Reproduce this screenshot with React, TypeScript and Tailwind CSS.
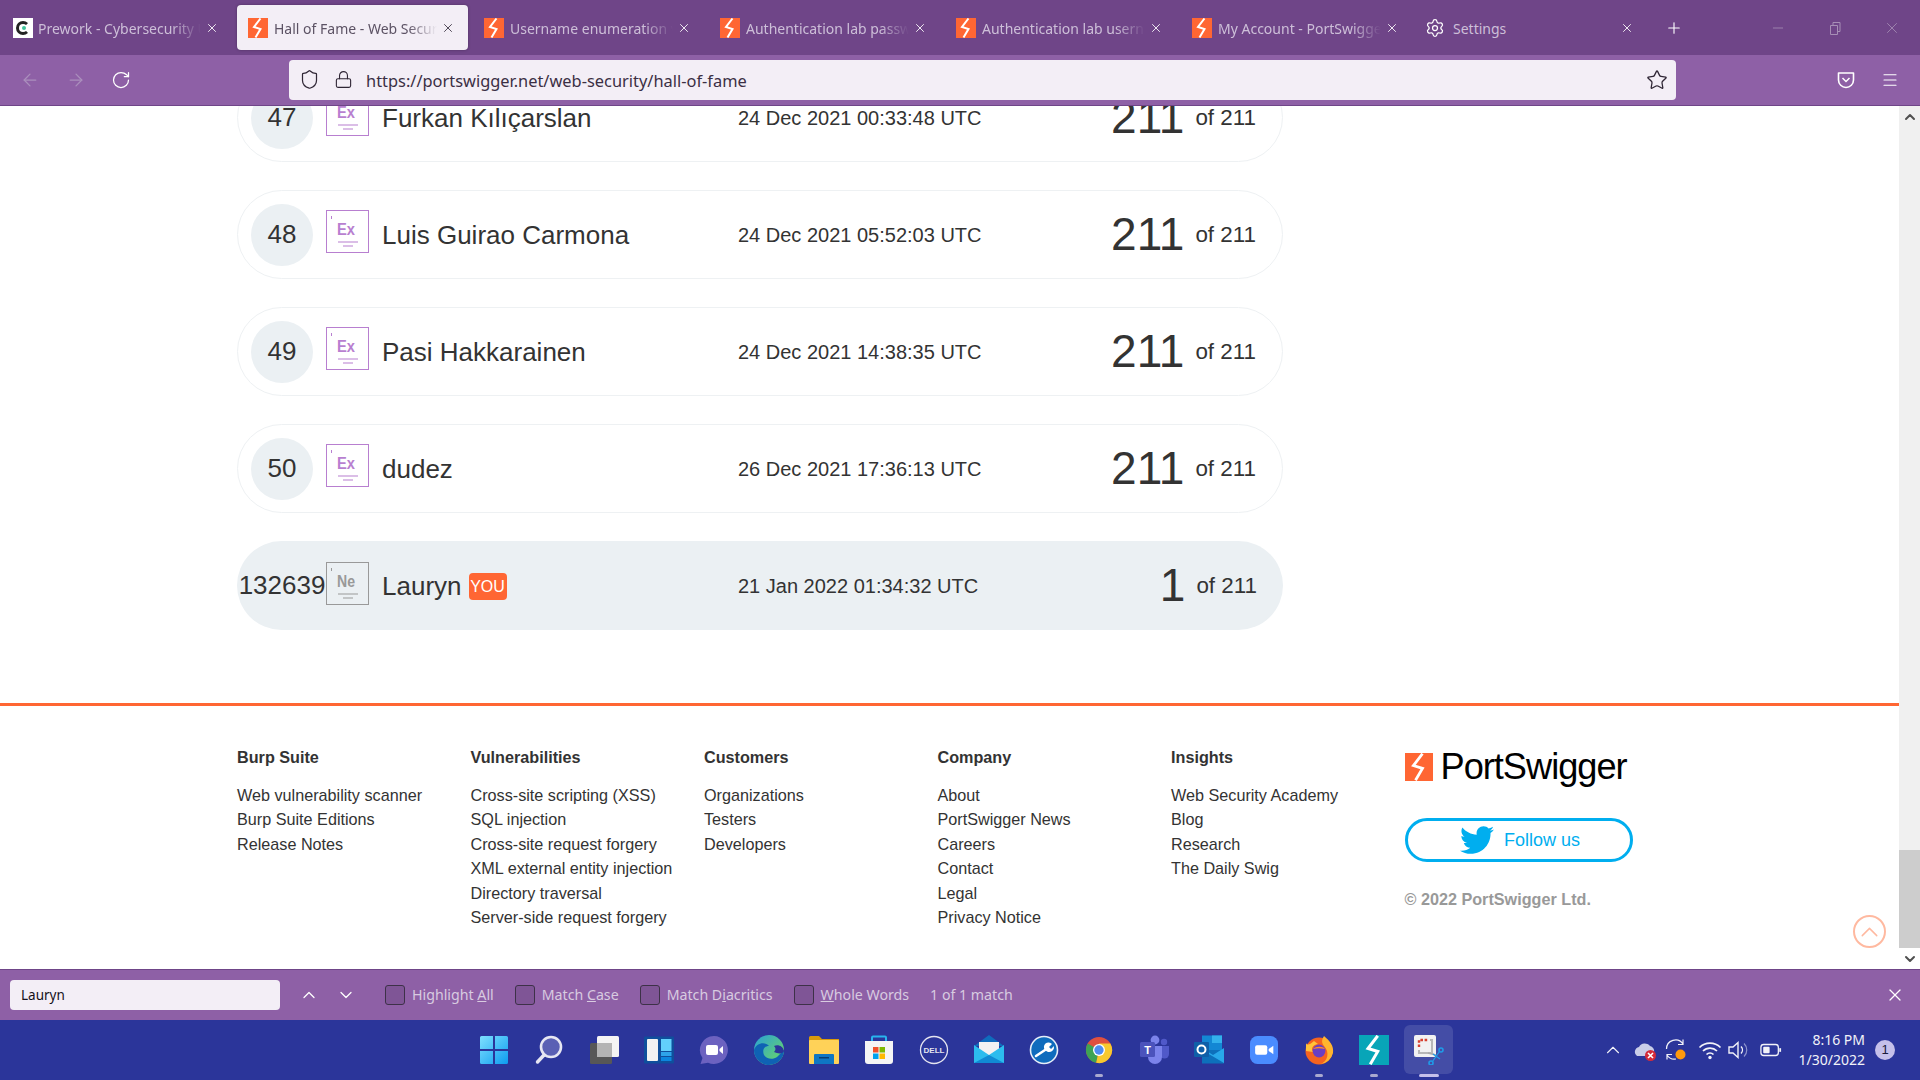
import React from "react";
import {
  ArrowLeft,
  ArrowRight,
  ChevronDown,
  ChevronUp,
  Lock,
  Menu,
  Minus,
  Plus,
  RotateCw,
  Settings,
  Shield,
  Star,
  X,
} from "lucide-react";
import { FaTwitter } from "react-icons/fa";

const rows = [
  { rank: "47", name: "Furkan Kılıçarslan", date: "24 Dec 2021 00:33:48 UTC", score: "211" },
  { rank: "48", name: "Luis Guirao Carmona", date: "24 Dec 2021 05:52:03 UTC", score: "211" },
  { rank: "49", name: "Pasi Hakkarainen", date: "24 Dec 2021 14:38:35 UTC", score: "211" },
  { rank: "50", name: "dudez", date: "26 Dec 2021 17:36:13 UTC", score: "211" },
];

const footerColumns = [
  { title: "Burp Suite", links: ["Web vulnerability scanner", "Burp Suite Editions", "Release Notes"] },
  {
    title: "Vulnerabilities",
    links: [
      "Cross-site scripting (XSS)",
      "SQL injection",
      "Cross-site request forgery",
      "XML external entity injection",
      "Directory traversal",
      "Server-side request forgery",
    ],
  },
  { title: "Customers", links: ["Organizations", "Testers", "Developers"] },
  { title: "Company", links: ["About", "PortSwigger News", "Careers", "Contact", "Legal", "Privacy Notice"] },
  { title: "Insights", links: ["Web Security Academy", "Blog", "Research", "The Daily Swig"] },
];

const BoltSquare = ({ className, bg = "#ff6633" }: { className?: string; bg?: string }) => (
  <svg viewBox="0 0 20 20" className={className}>
    <rect width="20" height="20" fill={bg} />
    <path d="M12.5 0.5 L6 9 L12.5 11 L7.5 19.5" fill="none" stroke="#fff" strokeWidth="2" />
  </svg>
);

const ElementBox = ({ label, color, you }: { label: string; color: string; you?: boolean }) => (
  <svg viewBox="0 0 43 43" className={`w-[43px] h-[43px] shrink-0 ${you ? "mb-[5px]" : "mb-[7px]"}`}>
    <rect x="0.5" y="0.5" width="42" height="42" fill="none" stroke={color} strokeWidth="1" />
    <path d="M5.5 6 V9" stroke={color} strokeWidth="1" />
    <text
      x="11"
      y="25"
      fontSize="17"
      fontWeight="600"
      fontFamily="'Liberation Sans', sans-serif"
      fill={color}
      textLength="18"
      lengthAdjust="spacingAndGlyphs"
    >
      {label}
    </text>
    <path d="M12 32 H32 M17 36 H27" stroke={color} strokeWidth="1.2" />
  </svg>
);

function Tab({ title, active, first }: { title: string; active?: boolean; first?: boolean }) {
  return (
    <div
      className={`w-[231px] h-[45px] mr-[5px] shrink-0 flex items-center pl-[11px] pr-[13px] rounded-[4px] ${
        active ? "bg-[#f3eef6] text-[#5c5264] shadow-[0_0_3px_rgba(0,0,0,0.3)]" : "text-[#cdbfd8]"
      }`}
    >
      {first ? (
        <div className="w-[20px] h-[20px] ml-[1px] -mr-[1px] bg-white flex items-center justify-center shrink-0 relative">
          <div className="w-[14px] h-[14px] rounded-full border-[3px] border-[#222] border-r-transparent" />
          <div className="absolute left-[9px] top-[8px] w-[4px] h-[4px] rounded-full bg-[#3fc49a]" />
        </div>
      ) : (
        <BoltSquare className="w-[20px] h-[20px] shrink-0" />
      )}
      <span className="ml-[6px] pt-[1px] flex-1 text-[14px] whitespace-nowrap overflow-hidden [mask-image:linear-gradient(to_right,black_82%,transparent)]">
        {title}
      </span>
      <X className={`w-[14px] h-[14px] shrink-0 ml-[4px] ${active ? "text-[#3c3444]" : "text-white"}`} strokeWidth={1.5} />
    </div>
  );
}

function Row({ rank, name, date, score, you }: { rank: string; name: string; date: string; score: string; you?: boolean }) {
  return (
    <div
      className={`w-[1046px] h-[89px] shrink-0 rounded-full flex items-center pr-[26px] text-[#333333] ${
        you ? "bg-[#ebf0f3] pl-[14px]" : "border border-[#eef1f3] pl-[13px]"
      }`}
    >
      <div className="w-[62px] h-[62px] rounded-full bg-[#ebf0f3] flex items-center justify-center text-[26px] shrink-0">
        {rank}
      </div>
      <div className="ml-[13px]">
        <ElementBox label={you ? "Ne" : "Ex"} color={you ? "#999999" : "#b87fd0"} you={you} />
      </div>
      <div className="ml-[13px] pt-[2px] w-[356px] flex items-center text-[26px] shrink-0">
        <span>{name}</span>
        {you && (
          <span className="ml-[7px] w-[38px] h-[27px] rounded-[4px] bg-[#ff6633] text-white text-[16px] flex items-center justify-center">
            YOU
          </span>
        )}
      </div>
      <div className="text-[20px] whitespace-nowrap">{date}</div>
      <div className="ml-auto flex items-center">
        <span className="text-[46px] leading-none -mt-[2px]">{score}</span>
        <span className="ml-[11px] text-[22.4px]">of 211</span>
      </div>
    </div>
  );
}

function FindOption({ children }: { children: React.ReactNode }) {
  return (
    <div className="flex items-center mr-[21px]">
      <div className="w-[20px] h-[20px] rounded-[3px] border border-[#3d3148] bg-[#7f5596]" />
      <span className="ml-[7px]">{children}</span>
    </div>
  );
}

const TaskIcons: { key: string; node: React.ReactNode; dot?: boolean; active?: boolean }[] = [
  {
    key: "start",
    node: (
      <svg viewBox="0 0 30 30" className="w-[30px] h-[30px]">
        <defs>
          <linearGradient id="win" x1="0" y1="0" x2="1" y2="1">
            <stop offset="0" stopColor="#7fe0ff" />
            <stop offset="1" stopColor="#0d9cf0" />
          </linearGradient>
        </defs>
        <path d="M1 2.5 Q1 1 2.5 1 H14 V14 H1 Z M16 1 H27.5 Q29 1 29 2.5 V14 H16 Z M1 16 H14 V29 H2.5 Q1 29 1 27.5 Z M16 16 H29 V27.5 Q29 29 27.5 29 H16 Z" fill="url(#win)" />
      </svg>
    ),
  },
  {
    key: "search",
    node: (
      <svg viewBox="0 0 30 30" className="w-[30px] h-[30px]">
        <circle cx="17" cy="12" r="10" fill="#5a60b4" stroke="#e6e6f2" strokeWidth="2.6" />
        <path d="M10 20 L3.5 27" stroke="#e6e6f2" strokeWidth="3.4" strokeLinecap="round" />
      </svg>
    ),
  },
  {
    key: "taskview",
    node: (
      <svg viewBox="0 0 30 30" className="w-[30px] h-[30px]">
        <rect x="1" y="8" width="22" height="21" rx="1.5" fill="#575757" />
        <rect x="8" y="1" width="22" height="21" rx="1.5" fill="#f4f4f4" />
        <rect x="8" y="8" width="15" height="14" fill="#b4b4b4" />
      </svg>
    ),
  },
  {
    key: "widgets",
    node: (
      <svg viewBox="0 0 30 30" className="w-[30px] h-[30px]">
        <rect width="30" height="27" y="1.5" rx="1" fill="#0f4f9c" />
        <rect x="3" y="4" width="11" height="22" rx="1" fill="#f2f2f2" />
        <rect x="17" y="4" width="10.5" height="12" fill="#62d0fb" />
        <rect x="17" y="17" width="10.5" height="4" fill="#2ea4ea" />
        <rect x="17" y="22" width="10.5" height="4" fill="#0c86de" />
      </svg>
    ),
  },
  {
    key: "chat",
    node: (
      <svg viewBox="0 0 30 30" className="w-[30px] h-[30px]">
        <path d="M15 1 A14 14 0 1 1 9 27.7 L1.5 29 L3.5 23 A14 14 0 0 1 15 1 Z" fill="#6c62c0" />
        <rect x="7" y="10" width="12" height="10" rx="2" fill="#fff" />
        <path d="M20.5 14 L24 11 V19 L20.5 16 Z" fill="#fff" />
      </svg>
    ),
  },
  {
    key: "edge",
    node: (
      <svg viewBox="0 0 30 30" className="w-[30px] h-[30px]">
        <defs>
          <linearGradient id="edgeTop" x1="0" y1="0" x2="1" y2="1">
            <stop offset="0" stopColor="#2a9fd8" />
            <stop offset="1" stopColor="#6fdc5c" />
          </linearGradient>
        </defs>
        <circle cx="15" cy="15" r="15" fill="url(#edgeTop)" />
        <path d="M30 15 A15 15 0 0 1 15 30 C7 30 0 23 0 15 C2 8 11 6 15 11 C10 11 8 15 10 20 C12 24 19 25 23 22 L30 15 Z" fill="#0f62b4" />
        <path d="M30 16 C29 11 24 9 20 11 C22 13 22 15 20 17 C24 19 29 19 30 16 Z" fill="#2b359a" />
      </svg>
    ),
  },
  {
    key: "explorer",
    node: (
      <svg viewBox="0 0 30 30" className="w-[30px] h-[30px]">
        <path d="M0 2.5 Q0 1 1.5 1 H10 L13 4 H30 V8 H0 Z" fill="#d99a0c" />
        <rect y="5" width="30" height="24" rx="1" fill="#ffd258" />
        <path d="M5 27 V20 Q5 19 6 19 H24 Q25 19 25 20 V29 H5 Z" fill="#0f76c4" />
        <rect x="10" y="22" width="10" height="1.5" fill="#063d73" />
      </svg>
    ),
  },
  {
    key: "store",
    node: (
      <svg viewBox="0 0 30 30" className="w-[30px] h-[30px]">
        <path d="M8 7 V2.5 Q8 1.5 9 1.5 H21 Q22 1.5 22 2.5 V7" fill="none" stroke="#28b4ee" strokeWidth="2" />
        <path d="M1 6 H29 V26 Q29 29 26 29 H4 Q1 29 1 26 Z" fill="#f5f5f5" />
        <rect x="9" y="12" width="5.5" height="5.5" fill="#f0512a" />
        <rect x="15.5" y="12" width="5.5" height="5.5" fill="#7eb900" />
        <rect x="9" y="18.5" width="5.5" height="5.5" fill="#00a2ef" />
        <rect x="15.5" y="18.5" width="5.5" height="5.5" fill="#feb900" />
      </svg>
    ),
  },
  {
    key: "dell",
    node: (
      <svg viewBox="0 0 30 30" className="w-[30px] h-[30px]">
        <circle cx="15" cy="15" r="13.5" fill="none" stroke="#e4e4ef" strokeWidth="1.3" />
        <text x="15" y="18" fontSize="8" fontWeight="700" textAnchor="middle" fontFamily="'Liberation Sans', sans-serif" fill="#e4e4ef">
          DELL
        </text>
      </svg>
    ),
  },
  {
    key: "mail",
    node: (
      <svg viewBox="0 0 30 30" className="w-[30px] h-[30px]">
        <path d="M15 0 L30 11 H0 Z" fill="#0f6cbd" />
        <path d="M5 7 H25 V15 L15 21 L5 15 Z" fill="#f2f2f2" />
        <path d="M0 10 L15 20 L30 10 V28 H0 Z" fill="#2cbcee" />
        <path d="M0 28 L15 20 L30 28 Z" fill="#108ad4" />
      </svg>
    ),
  },
  {
    key: "tools",
    node: (
      <svg viewBox="0 0 30 30" className="w-[30px] h-[30px]">
        <circle cx="15" cy="15" r="13.5" fill="#0f6cbd" stroke="#e6eef8" strokeWidth="1.6" />
        <path d="M7 21 L16 15" stroke="#fff" strokeWidth="2.6" strokeLinecap="round" />
        <path d="M16 15 A4.5 4.5 0 0 1 23 9 L20 12 L22 14 L25 11 A5 5 0 0 1 18 16.5 Z" fill="#fff" />
      </svg>
    ),
  },
  {
    key: "chrome",
    dot: true,
    node: (
      <svg viewBox="0 0 30 30" className="w-[28px] h-[28px]">
        <circle cx="15" cy="15" r="14" fill="#e0503f" />
        <path d="M15 15 L2.9 8 A14 14 0 0 0 12 28.7 Z" fill="#3da354" />
        <path d="M15 15 L12 28.7 A14 14 0 0 0 27.1 8 L15 8 Z" fill="#f8c92e" />
        <circle cx="15" cy="15" r="6.4" fill="#fff" />
        <circle cx="15" cy="15" r="5" fill="#4f8df0" />
      </svg>
    ),
  },
  {
    key: "teams",
    node: (
      <svg viewBox="0 0 30 30" className="w-[30px] h-[30px]">
        <circle cx="25" cy="7" r="3.2" fill="#5059c9" />
        <circle cx="16" cy="5" r="4.4" fill="#7b83eb" />
        <path d="M21 11 H30 V19 A4.5 4.5 0 0 1 21 19 Z" fill="#5059c9" />
        <path d="M9 11 H23 V22 A7 7 0 0 1 9 22 Z" fill="#7b83eb" />
        <rect x="1" y="7" width="15" height="15" rx="1.5" fill="#4b53bc" />
        <text x="8.5" y="19" fontSize="11" fontWeight="700" textAnchor="middle" fontFamily="'Liberation Sans', sans-serif" fill="#fff">
          T
        </text>
      </svg>
    ),
  },
  {
    key: "outlook",
    node: (
      <svg viewBox="0 0 30 30" className="w-[30px] h-[30px]">
        <rect x="8" y="0.5" width="20" height="15" fill="#1387d4" />
        <rect x="18" y="0.5" width="10" height="7.5" fill="#33b1ec" />
        <path d="M8 15 H30 V28 Q30 28.5 29 28.5 H8 Z" fill="#0d70bb" />
        <path d="M8 13 L19 20 L30 13 V28 L8 15 Z" fill="#28a8ea" />
        <rect x="0" y="7" width="15" height="15" rx="1" fill="#0f5fa8" />
        <circle cx="7.5" cy="14.5" r="4" fill="none" stroke="#fff" strokeWidth="2" />
      </svg>
    ),
  },
  {
    key: "zoom",
    node: (
      <svg viewBox="0 0 30 30" className="w-[28px] h-[28px]">
        <rect width="30" height="30" rx="8" fill="#4a8cff" />
        <rect x="5.5" y="10" width="13" height="10" rx="2" fill="#fff" />
        <path d="M20 14 L25 10.5 V19.5 L20 16 Z" fill="#fff" />
      </svg>
    ),
  },
  {
    key: "firefox",
    dot: true,
    node: (
      <svg viewBox="0 0 30 30" className="w-[30px] h-[30px]">
        <circle cx="15" cy="16" r="13.5" fill="#f5631f" />
        <path d="M20 1 C26 6 30 11 29 18 A14 14 0 0 1 16 29 C24 27 26 17 20 11 C17 7 18 4 20 1 Z" fill="#ffb52e" />
        <path d="M2 8 C3 11 7 9 10 6 L14 9 C8 10 7 14 9 17 L2 16 Z" fill="#ffc23a" />
        <circle cx="15" cy="16" r="6.4" fill="#6a3fc2" />
        <path d="M9 14 C12 11 19 11 21 14 C17 13 13 13 9 14 Z" fill="#ff8a2a" />
      </svg>
    ),
  },
  {
    key: "burp",
    dot: true,
    node: <BoltSquare className="w-[30px] h-[30px]" bg="#08a5b8" />,
  },
  {
    key: "snip",
    dot: true,
    active: true,
    node: (
      <svg viewBox="0 0 30 30" className="w-[30px] h-[30px]">
        <rect y="0" width="22" height="22" rx="2" fill="#f2f2f2" />
        <path d="M5 12 V5 H14" fill="none" stroke="#d7402f" strokeWidth="2.4" strokeDasharray="2.6 1.6" />
        <path d="M16 5 H18 V18 H5 V15" fill="none" stroke="#b8b8b8" strokeWidth="2" />
        <path d="M14 18 L22 20" stroke="#aaa" strokeWidth="1.4" />
        <circle cx="27" cy="15" r="2" fill="none" stroke="#1f9be8" strokeWidth="1.6" />
        <circle cx="17" cy="28" r="2" fill="none" stroke="#1f9be8" strokeWidth="1.6" />
        <path d="M25.5 16.5 L18.5 26.5 M19 19 L26 24" stroke="#1f9be8" strokeWidth="1.3" />
      </svg>
    ),
  },
];

function Tray() {
  return (
    <div className="flex items-center justify-end text-[#f2f2f8]">
      <ChevronUp className="w-[22px] h-[22px]" strokeWidth={1.2} />
      <svg viewBox="0 0 24 24" className="w-[24px] h-[24px] ml-[9px]">
        <path d="M4 18 A5 5 0 0 1 6 9 A6.5 6.5 0 0 1 17 8 A5 5 0 0 1 21 14 L14 18 Z" fill="#c9cde8" />
        <circle cx="17.5" cy="17.5" r="5.5" fill="#d42a3a" />
        <path d="M15 15 L20 20 M20 15 L15 20" stroke="#fff" strokeWidth="1.6" />
      </svg>
      <svg viewBox="0 0 24 24" className="w-[24px] h-[24px] ml-[7px]">
        <path d="M2.5 11 A9 9 0 0 1 19 6 M19 1.5 V6.5 H14" fill="none" stroke="#f2f2f8" strokeWidth="1.2" />
        <path d="M12 21 A9 9 0 0 1 3 17 M3 21.5 V16.5 H8" fill="none" stroke="#f2f2f8" strokeWidth="1.2" />
        <circle cx="16.5" cy="16.5" r="5" fill="#ff9a0d" />
      </svg>
      <svg viewBox="0 0 24 24" className="w-[24px] h-[24px] ml-[10px]">
        <path d="M1.5 9.5 A15 15 0 0 1 22.5 9.5 M5 13 A10 10 0 0 1 19 13 M8.5 16.5 A5 5 0 0 1 15.5 16.5" fill="none" stroke="#f2f2f8" strokeWidth="1.7" />
        <circle cx="12" cy="19.5" r="1.7" fill="#f2f2f8" />
      </svg>
      <svg viewBox="0 0 24 24" className="w-[24px] h-[24px] ml-[5px]">
        <path d="M2 9 H6 L11 4.5 V19.5 L6 15 H2 Z" fill="none" stroke="#f2f2f8" strokeWidth="1.4" />
        <path d="M14 8.5 A5 5 0 0 1 14 15.5" fill="none" stroke="#f2f2f8" strokeWidth="1.4" />
        <path d="M17 5.5 A9 9 0 0 1 17 18.5" fill="none" stroke="#8f95cc" strokeWidth="1.2" />
      </svg>
      <svg viewBox="0 0 24 24" className="w-[22px] h-[24px] ml-[9px]">
        <rect x="1" y="6" width="19" height="12" rx="3" fill="none" stroke="#f2f2f8" strokeWidth="1.4" />
        <rect x="3.5" y="8.5" width="7" height="7" rx="1" fill="#f2f2f8" />
        <rect x="21" y="10" width="2" height="4" fill="#f2f2f8" />
      </svg>
      <div className="ml-[15px] w-[68px] text-right text-[14px] leading-[20px] whitespace-nowrap font-['Noto_Sans',sans-serif]">
        <div>8:16 PM</div>
        <div>1/30/2022</div>
      </div>
      <div className="ml-[10px] mr-[25px] w-[20px] h-[20px] rounded-full bg-[#c5c0ea] text-[#1b1b3a] text-[13px] flex items-center justify-center">
        1
      </div>
    </div>
  );
}

export default function App() {
  return (
    <div className="w-[1920px] h-[1080px] flex flex-col overflow-hidden bg-white font-['Liberation_Sans',Arial,sans-serif]">
      {/* tab strip */}
      <div className="h-[55px] shrink-0 bg-[#6f4588] flex items-start pt-[5px] pl-[1px] font-['Noto_Sans',sans-serif]">
        <Tab first title="Prework - Cybersecurity U" />
        <Tab active title="Hall of Fame - Web Security" />
        <Tab title="Username enumeration via" />
        <Tab title="Authentication lab passwords" />
        <Tab title="Authentication lab usernames" />
        <Tab title="My Account - PortSwigger" />
        <div className="w-[224px] h-[45px] shrink-0 flex items-center pl-[8px] text-[#cdbfd8]">
          <Settings className="w-[20px] h-[20px] text-white shrink-0" strokeWidth={1.5} />
          <span className="ml-[8px] pt-[1px] flex-1 text-[14px]">Settings</span>
          <X className="w-[14px] h-[14px] text-white mr-[7px]" strokeWidth={1.5} />
        </div>
        <div className="h-[45px] flex items-center ml-[24px]">
          <Plus className="w-[18px] h-[18px] text-white" strokeWidth={1.5} />
        </div>
        <div className="h-[45px] flex items-center ml-auto text-[#a78fb6]">
          <Minus className="w-[16px] h-[16px]" strokeWidth={1.2} />
          <svg viewBox="0 0 16 16" className="w-[16px] h-[16px] ml-[41px]">
            <path d="M3.5 5.5 H10.5 V14.5 H3.5 Z M6 5.5 V2.5 H13 V11.5 H10.5" fill="none" stroke="currentColor" strokeWidth="1" />
          </svg>
          <X className="w-[18px] h-[18px] ml-[40px] mr-[19px]" strokeWidth={1.1} />
        </div>
      </div>

      {/* nav bar */}
      <div className="h-[51px] shrink-0 bg-[#8e60a6] border-b border-[#6f4588] flex items-center pb-[1px]">
        <ArrowLeft className="w-[20px] h-[20px] ml-[20px] text-[#ab8fbd]" strokeWidth={1.5} />
        <ArrowRight className="w-[20px] h-[20px] ml-[26px] text-[#ab8fbd]" strokeWidth={1.5} />
        <RotateCw className="w-[20px] h-[20px] ml-[25px] text-white" strokeWidth={1.5} />
        <div className="ml-[158px] w-[1387px] h-[40px] bg-[#f3eef6] rounded-[4px] flex items-center pl-[10px] pr-[8px] text-[#2f2635]">
          <Shield className="w-[21px] h-[21px]" strokeWidth={1.4} />
          <Lock className="w-[19px] h-[21px] ml-[14px]" strokeWidth={1.4} />
          <span className="ml-[13px] pt-[3px] text-[16.4px] text-[#3b2f44] font-['Noto_Sans',sans-serif]">
            https://portswigger.net/web-security/hall-of-fame
          </span>
          <Star className="w-[22px] h-[22px] ml-auto" strokeWidth={1.4} />
        </div>
        <svg viewBox="0 0 20 20" className="w-[20px] h-[20px] ml-[160px]">
          <path d="M2.5 3 H17.5 V10 A7.5 7.5 0 0 1 2.5 10 Z" fill="none" stroke="#fff" strokeWidth="1.6" strokeLinejoin="round" />
          <path d="M6.5 8 L10 11.5 L13.5 8" fill="none" stroke="#fff" strokeWidth="1.5" />
        </svg>
        <Menu className="w-[18px] h-[18px] ml-[25px] text-white" strokeWidth={1.5} />
      </div>

      {/* page */}
      <div className="flex-1 min-h-0 flex">
        <div className="flex-1 min-w-0 overflow-hidden relative">
          <div className="pl-[237px] flex flex-col gap-[28px] -mt-[33px]">
            {rows.map((row) => (
              <Row key={row.rank} {...row} />
            ))}
            <Row you rank="132639" name="Lauryn" date="21 Jan 2022 01:34:32 UTC" score="1" />
          </div>

          <div className="mt-[73px] border-t-[3px] border-[#ff6633] pl-[237px] pt-[39px] grid grid-cols-[repeat(5,233.5px)_auto] text-[16.2px] text-[#333333]">
            {footerColumns.map((col) => (
              <div key={col.title}>
                <div className="font-bold leading-[24px] mb-[14px]">{col.title}</div>
                {col.links.map((link) => (
                  <div key={link} className="leading-[24.4px] whitespace-nowrap">
                    {link}
                  </div>
                ))}
              </div>
            ))}
            <div>
              <div className="flex items-center h-[38px] mt-[3px]">
                <BoltSquare className="w-[28px] h-[28px]" />
                <span className="ml-[8px] text-[36.2px] leading-none tracking-[-1px] text-black">PortSwigger</span>
              </div>
              <div className="mt-[32px] w-[228px] h-[44px] rounded-full border-[3px] border-[#00aeef] flex items-center justify-center text-[#00aeef] text-[18px]">
                <FaTwitter className="w-[34px] h-[34px] mr-[10px] ml-[3px]" />
                Follow us
              </div>
              <div className="mt-[25px] font-bold text-[#999999]">© 2022 PortSwigger Ltd.</div>
            </div>
          </div>

          {/* back to top */}
          <div className="absolute right-[13px] bottom-[21px] w-[33px] h-[33px] rounded-full border-2 border-[#ffb9a0] flex items-center justify-center">
            <ChevronUp className="w-[30px] h-[30px] text-[#ffb9a0]" strokeWidth={1.2} />
          </div>
        </div>

        <div className="w-[21px] shrink-0 bg-[#f0f0f0] flex flex-col items-center">
          <div className="h-[21px] flex items-center justify-center">
            <ChevronUp className="w-[16px] h-[16px] text-[#505050]" strokeWidth={3} />
          </div>
          <div className="mt-auto w-full h-[98px] bg-[#cdcdcd]" />
          <div className="h-[21px] w-full bg-white flex items-center justify-center">
            <ChevronDown className="w-[16px] h-[16px] text-[#505050]" strokeWidth={3} />
          </div>
        </div>
      </div>

      {/* find bar */}
      <div className="h-[51px] shrink-0 bg-[#8e60a6] border-t border-[#6f4588] flex items-center text-[14.2px] text-[#d8cbe0] font-['Noto_Sans',sans-serif]">
        <div className="ml-[10px] w-[270px] h-[30px] rounded-[4px] bg-[#f3eef6] text-[13.5px] text-[#15101a] flex items-center pl-[11px]">
          Lauryn
        </div>
        <ChevronUp className="w-[20px] h-[20px] ml-[19px] text-white" strokeWidth={1.5} />
        <ChevronDown className="w-[20px] h-[20px] ml-[17px] text-white" strokeWidth={1.5} />
        <div className="ml-[29px] flex items-center">
          <FindOption>
            Highlight <u>A</u>ll
          </FindOption>
          <FindOption>
            Match <u>C</u>ase
          </FindOption>
          <FindOption>
            Match D<u>i</u>acritics
          </FindOption>
          <FindOption>
            <u>W</u>hole Words
          </FindOption>
          <span>1 of 1 match</span>
        </div>
        <X className="w-[20px] h-[20px] ml-auto mr-[15px] text-white" strokeWidth={1.5} />
      </div>

      {/* windows taskbar */}
      <div className="h-[60px] shrink-0 bg-[#2b359a] grid grid-cols-[1fr_auto_1fr] items-center">
        <div />
        <div className="flex ml-[2px]">
          {TaskIcons.map((icon) => (
            <div key={icon.key} className="relative w-[55px] h-[50px] flex items-center justify-center">
              {icon.active && (
                <div className="absolute left-[3px] top-0 w-[49px] h-[49px] rounded-[6px] bg-[#444da6]" />
              )}
              <div className="relative">{icon.node}</div>
              {icon.dot && (
                <div
                  className={`absolute bottom-[-2px] h-[3px] rounded-full ${
                    icon.active ? "w-[20px] bg-[#c5c0ea]" : "w-[8px] bg-[#a9a9cf]"
                  }`}
                />
              )}
            </div>
          ))}
        </div>
        <Tray />
      </div>
    </div>
  );
}
